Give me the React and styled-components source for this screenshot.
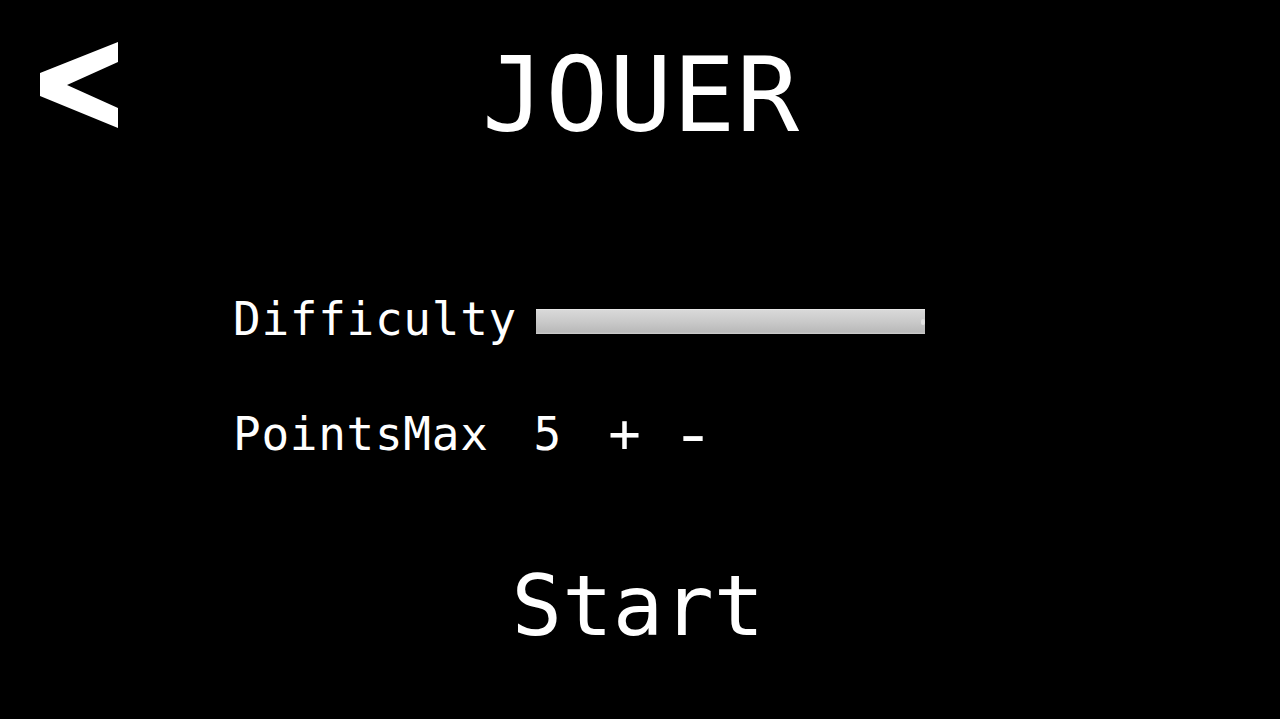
import React, { useState } from "react";
import styled, { createGlobalStyle } from "styled-components";

const GlobalStyle = createGlobalStyle`
  html, body {
    margin: 0;
    padding: 0;
    background: #000;
  }
  body {
    font-family: "DejaVu Sans Mono", "Liberation Mono", monospace;
    color: #fff;
  }
`;

const Screen = styled.div`
  width: 1280px;
  height: 719px;
  background: #000;
  display: flex;
  flex-direction: column;
  overflow: hidden;
`;

const Header = styled.header`
  position: relative;
  display: flex;
  justify-content: center;
  padding-top: 43px;
`;

const BackButton = styled.button`
  position: absolute;
  left: 40px;
  top: 42px;
  width: 78px;
  height: 86px;
  padding: 0;
  border: none;
  background: none;
  cursor: pointer;
  svg {
    display: block;
  }
`;

const Title = styled.h1`
  margin: 0;
  font-size: 104px;
  font-weight: normal;
  line-height: 1;
  letter-spacing: 1px;
  padding-left: 2px;
`;

const Form = styled.div`
  display: flex;
  flex-direction: column;
  gap: 62px;
  margin: 149px 0 0 234px;
`;

const Row = styled.div`
  display: flex;
  align-items: center;
`;

const Label = styled.span`
  font-size: 46px;
  line-height: 1;
  letter-spacing: 0.7px;
  margin-left: -1px;
`;

const Slider = styled.input`
  -webkit-appearance: none;
  appearance: none;
  width: 389px;
  height: 24px;
  margin: 4px 0 0 19px;
  border: none;
  border-top: 1px solid #e6e6e6;
  background: linear-gradient(#d9d9d9, #c9c9c9 50%, #b9b9b9 92%, #cfcfcf);
  outline: none;

  &::-webkit-slider-thumb {
    -webkit-appearance: none;
    width: 4px;
    height: 6px;
    border-radius: 2px;
    background: #e2e2e2;
  }
`;

const Value = styled.span`
  font-size: 46px;
  line-height: 1;
  margin-left: 45px;
`;

const StepButton = styled.button`
  padding: 0;
  border: none;
  background: none;
  color: #fff;
  font-family: inherit;
  font-size: ${(p) => p.$size}px;
  line-height: 1;
  margin-left: ${(p) => p.$gap}px;
  transform: scaleX(${(p) => p.$stretch || 1});
  cursor: pointer;
`;

const Footer = styled.div`
  display: flex;
  justify-content: center;
  margin-top: 100px;
`;

const StartButton = styled.button`
  padding: 0;
  border: none;
  background: none;
  color: #fff;
  font-family: inherit;
  font-size: 84px;
  line-height: 1;
  margin-left: -4px;
  cursor: pointer;
`;

function BackIcon() {
  return (
    <svg width="78" height="86" viewBox="0 0 78 86">
      <polygon
        points="78,0 78,20 27,43 78,66 78,86 0,54 0,31"
        fill="#fff"
      />
    </svg>
  );
}

export default function App() {
  const [difficulty, setDifficulty] = useState(100);
  const [points, setPoints] = useState(5);

  return (
    <Screen>
      <GlobalStyle />
      <Header>
        <BackButton aria-label="Retour">
          <BackIcon />
        </BackButton>
        <Title>JOUER</Title>
      </Header>

      <Form>
        <Row>
          <Label>Difficulty</Label>
          <Slider
            type="range"
            min="0"
            max="100"
            value={difficulty}
            onChange={(e) => setDifficulty(Number(e.target.value))}
          />
        </Row>
        <Row>
          <Label>PointsMax</Label>
          <Value>{points}</Value>
          <StepButton $size={54} $gap={47} onClick={() => setPoints(points + 1)}>
            +
          </StepButton>
          <StepButton
            $size={60}
            $gap={34}
            $stretch={1.26}
            onClick={() => setPoints(Math.max(1, points - 1))}
          >
            -
          </StepButton>
        </Row>
      </Form>

      <Footer>
        <StartButton>Start</StartButton>
      </Footer>
    </Screen>
  );
}
